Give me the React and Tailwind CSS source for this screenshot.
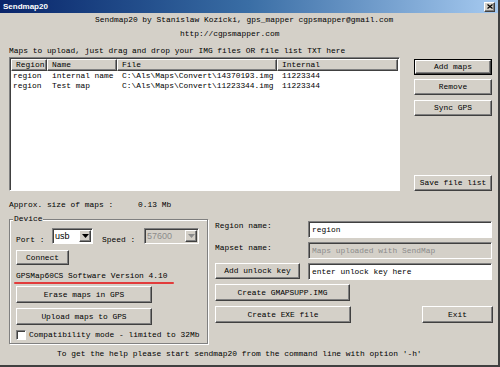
import React from 'react';

const raised =
  'bg-[#d4d0c8] border border-t-white border-l-white border-r-[#404040] border-b-[#404040] shadow-[inset_-1px_-1px_0_#808080]';
const sunken =
  'border border-t-[#808080] border-l-[#808080] border-r-white border-b-white shadow-[inset_1px_1px_0_#404040]';

const Btn = ({ className = '', children }) => (
  <button type="button" className={`${raised} flex items-center justify-center leading-none ${className}`}>
    {children}
  </button>
);

const Arrow = ({ color = '#000' }) => (
  <svg width="7" height="4" viewBox="0 0 7 4">
    <path d="M0 0h7L3.5 4z" fill={color} />
  </svg>
);

const Select = ({ value, disabled, className = '' }) => (
  <div
    className={`${sunken} flex items-stretch font-['Liberation_Sans',sans-serif] text-[9px] ${
      disabled ? 'bg-[#d4d0c8] text-[#8c8c8c]' : 'bg-white text-black'
    } ${className}`}
  >
    <span className="flex-1 pl-[2px] pt-[1px] leading-[13px]">{value}</span>
    <span className={`${raised} w-[12px] my-[1px] mr-[1px] flex items-center justify-center`}>
      <Arrow color={disabled ? '#8c8c8c' : '#000'} />
    </span>
  </div>
);

const Field = ({ value, disabled }) => (
  <div
    className={`${sunken} w-[184px] h-[17px] pl-[3px] flex items-center leading-none ${
      disabled ? 'bg-[#d4d0c8] text-[#8c8c8c]' : 'bg-white text-black'
    }`}
  >
    {value}
  </div>
);

const columns = [
  { name: 'Region', w: 'w-[36px]' },
  { name: 'Name', w: 'w-[70px]' },
  { name: 'File', w: 'w-[160px]' },
  { name: 'Internal', w: 'w-[121px]' },
];

const maps = [
  ['region', 'internal name', 'C:\\Als\\Maps\\Convert\\14370193.img', '11223344'],
  ['region', 'Test map', 'C:\\Als\\Maps\\Convert\\11223344.img', '11223344'],
];

const MapList = () => (
  <div className={`${sunken} w-[391px] h-[134px] bg-white p-[1px] pl-[1px]`}>
    <div className="flex h-[12px]">
      {columns.map(c => (
        <div key={c.name} className={`${raised} ${c.w} pl-[4px] leading-[10px] whitespace-nowrap`}>
          {c.name}
        </div>
      ))}
    </div>
    {maps.map((row, i) => (
      <div key={i} className="flex h-[10px] leading-[10px] whitespace-nowrap">
        {row.map((cell, j) => (
          <div key={j} className={`${columns[j].w} ${j === 0 ? 'pl-[2px]' : 'pl-[5px]'}`}>
            {cell}
          </div>
        ))}
      </div>
    ))}
  </div>
);

export default function App() {
  return (
    <div className="w-[500px] h-[367px] bg-[#d4d0c8] flex flex-col overflow-hidden font-['Liberation_Mono',monospace] text-[7.9px] text-black border-r-2 border-b-2 border-r-[#404040] border-b-[#404040]">
      {/* title bar */}
      <div className="h-[13px] shrink-0 flex items-center bg-linear-to-r from-[#0a246a] via-[#3a6ea5] to-[#a6caf0]">
        <span className="ml-[3px] font-['Liberation_Sans',sans-serif] font-bold text-[8px] text-white leading-none">
          Sendmap20
        </span>
        <span className={`${raised} ml-auto mr-[3px] w-[11px] h-[10px] flex items-center justify-center`}>
          <svg width="6" height="5" viewBox="0 0 6 5">
            <path d="M0.5 0.5l5 4M5.5 0.5l-5 4" stroke="#000" strokeWidth="1.2" />
          </svg>
        </span>
      </div>

      <div className="mt-[2px] pl-[95px] leading-[10px] whitespace-nowrap">
        Sendmap20 by Stanislaw Kozicki, gps_mapper cgpsmapper@gmail.com
      </div>
      <div className="mt-[4px] pl-[180px] leading-[10px]">http://cgpsmapper.com</div>
      <div className="mt-[7px] pl-[9px] leading-[10px] whitespace-nowrap">
        Maps to upload, just drag and drop your IMG files OR file list TXT here
      </div>

      {/* list + buttons */}
      <div className="mt-[1px] flex h-[134px] shrink-0">
        <div className="ml-[9px]">
          <MapList />
        </div>
        <div className="ml-[14px] w-[78px] flex flex-col">
          <div className="mt-[2px] h-[16px] border border-black">
            <Btn className="w-full h-full">Add maps</Btn>
          </div>
          <Btn className="mt-[4px] h-[16px]">Remove</Btn>
          <Btn className="mt-[5px] h-[16px]">Sync GPS</Btn>
          <Btn className="mt-auto h-[16px]">Save file list</Btn>
        </div>
      </div>

      <div className="mt-[9px] flex leading-[10px] whitespace-nowrap">
        <span className="pl-[9px] w-[138px]">Approx. size of maps :</span>
        <span>0.13 Mb</span>
      </div>

      {/* lower area */}
      <div className="flex items-start shrink-0">
        <fieldset className="ml-[9px] mt-[4px] w-[199px] h-[130px] border border-[#808080] shadow-[inset_1px_1px_0_#fff,1px_1px_0_#fff]">
          <legend className="ml-[3px] px-[1px] leading-[10px] bg-[#d4d0c8]">Device</legend>
          <div className="flex items-start mt-[4px] ml-[6px]">
            <span className="w-[36px] mt-[7px] leading-[10px]">Port :</span>
            <Select value="usb" className="w-[41px] h-[16px]" />
            <span className="ml-[9px] w-[42px] mt-[7px] leading-[10px]">Speed :</span>
            <Select value="57600" disabled className="w-[55px] h-[16px]" />
          </div>
          <Btn className="mt-[5px] ml-[6px] w-[53px] h-[15px]">Connect</Btn>
          <div className="mt-[6px] ml-[6px] leading-[10px] whitespace-nowrap">
            GPSMap60CS Software Version 4.10
          </div>
          <div className="mt-[1px] ml-[4px] w-[160px] h-[2px] bg-[#e23b3b] rounded-full" />
          <Btn className="mt-[2px] ml-[6px] w-[136px] h-[17px]">Erase maps in GPS</Btn>
          <Btn className="mt-[5px] ml-[6px] w-[136px] h-[17px]">Upload maps to GPS</Btn>
          <div className="mt-[5px] ml-[6px] flex items-center whitespace-nowrap">
            <span className={`${sunken} w-[10px] h-[10px] bg-white`} />
            <span className="ml-[3px] leading-[10px]">Compatibility mode - limited to 32Mb</span>
          </div>
        </fieldset>

        <div className="ml-[7px] flex flex-col">
          <div className="mt-[11px] flex items-start">
            <span className="w-[93px] leading-[10px]">Region name:</span>
            <Field value="region" />
          </div>
          <div className="mt-[4px] flex items-start">
            <span className="w-[93px] leading-[10px] pt-[1px]">Mapset name:</span>
            <Field value="Maps uploaded with SendMap" disabled />
          </div>
          <div className="mt-[4px] flex items-start">
            <Btn className="w-[85px] h-[16px]">Add unlock key</Btn>
            <span className="ml-[8px]">
              <Field value="enter unlock key here" />
            </span>
          </div>
          <Btn className="mt-[4px] w-[135px] h-[17px]">Create GMAPSUPP.IMG</Btn>
          <div className="mt-[5px] flex">
            <Btn className="w-[136px] h-[17px]">Create EXE file</Btn>
            <Btn className="ml-[71px] w-[71px] h-[17px]">Exit</Btn>
          </div>
        </div>
      </div>

      <div className="mt-[5px] pl-[57px] leading-[10px] whitespace-nowrap">
        To get the help please start sendmap20 from the command line with option '-h'
      </div>
    </div>
  );
}
